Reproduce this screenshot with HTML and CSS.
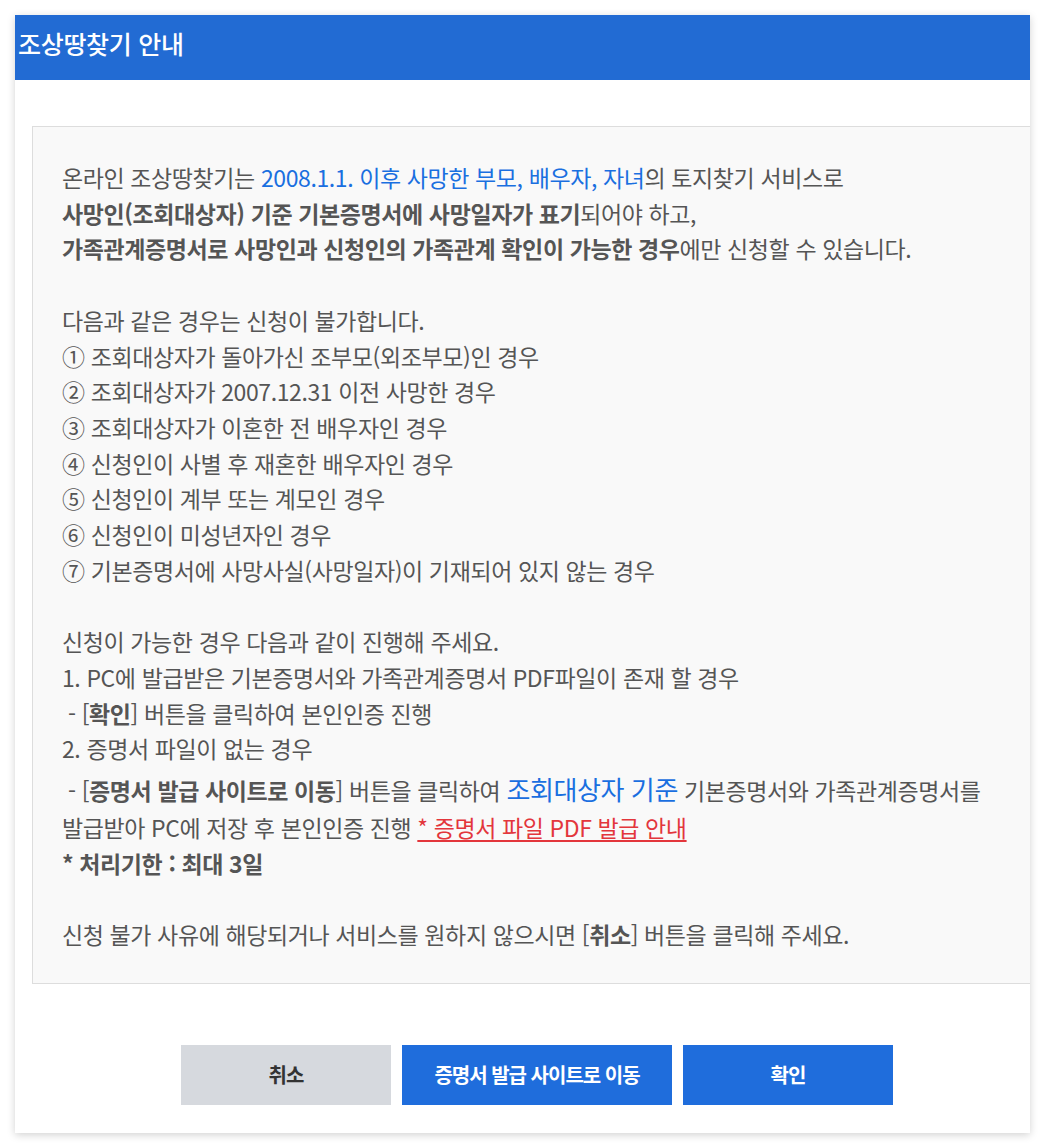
FILE: index.html
```html
<!DOCTYPE html>
<html lang="ko">
<head>
  <meta charset="UTF-8" />
  <meta name="viewport" content="width=device-width, initial-scale=1" />
  <title>조상땅찾기 안내</title>
  <link rel="stylesheet" href="styles.css">
</head>
<body>
  <div class="modal">
    <div class="modal-header">
      <h1>조상땅찾기 안내</h1>
    </div>
    <div class="modal-body">
      <div class="notice">
        <p>
          온라인 조상땅찾기는 <span class="blue">2008.1.1. 이후 사망한 부모, 배우자, 자녀</span>의 토지찾기 서비스로<br>
          <b>사망인(조회대상자) 기준 기본증명서에 사망일자가 표기</b>되어야 하고,<br>
          <b>가족관계증명서로 사망인과 신청인의 가족관계 확인이 가능한 경우</b>에만 신청할 수 있습니다.
        </p>
        <p>
          다음과 같은 경우는 신청이 불가합니다.<br>
          ① 조회대상자가 돌아가신 조부모(외조부모)인 경우<br>
          ② 조회대상자가 2007.12.31 이전 사망한 경우<br>
          ③ 조회대상자가 이혼한 전 배우자인 경우<br>
          ④ 신청인이 사별 후 재혼한 배우자인 경우<br>
          ⑤ 신청인이 계부 또는 계모인 경우<br>
          ⑥ 신청인이 미성년자인 경우<br>
          ⑦ 기본증명서에 사망사실(사망일자)이 기재되어 있지 않는 경우
        </p>
        <p>
          신청이 가능한 경우 다음과 같이 진행해 주세요.<br>
          1. PC에 발급받은 기본증명서와 가족관계증명서 PDF파일이 존재 할 경우<br>
          &nbsp;- [<b>확인</b>] 버튼을 클릭하여 본인인증 진행<br>
          2. 증명서 파일이 없는 경우<br>
          &nbsp;- [<b>증명서 발급 사이트로 이동</b>] 버튼을 클릭하여 <span class="blue big">조회대상자 기준</span> 기본증명서와 가족관계증명서를
          발급받아 PC에 저장 후 본인인증 진행 <a href="#" class="guide-link">* 증명서 파일 PDF 발급 안내</a><br>
          <b>* 처리기한 : 최대 3일</b>
        </p>
        <p>
          신청 불가 사유에 해당되거나 서비스를 원하지 않으시면 [<b>취소</b>] 버튼을 클릭해 주세요.
        </p>
      </div>
      <div class="button-row">
        <button type="button" class="btn btn-gray">취소</button>
        <button type="button" class="btn btn-blue btn-wide">증명서 발급 사이트로 이동</button>
        <button type="button" class="btn btn-blue">확인</button>
      </div>
    </div>
  </div>
</body>
</html>
```

FILE: styles.css
```css
body {
  margin: 0;
  padding: 15px;
  background: #ffffff;
  font-family: "Noto Sans CJK KR", "Noto Sans", sans-serif;
}
.modal {
  width: 1015px;
  background: #ffffff;
  box-shadow: 0 2px 8px rgba(0, 0, 0, 0.18);
  overflow: hidden;
}
.modal-header {
  background-color: #226bd3;
  height: 65px;
  box-sizing: border-box;
  padding: 9px 0 0 3px;
}
.modal-header h1 {
  margin: 0;
  font-size: 25px;
  font-weight: 500;
  line-height: 38px;
  color: #ffffff;
  letter-spacing: -0.3px;
}
.modal-body {
  padding: 46px 0 28px 17px;
}
.notice {
  background-color: #f9f9f9;
  border: 1px solid #dddddd;
  border-right: none;
  padding: 33px 36px 30px 29px;
  font-size: 23px;
  line-height: 35.7px;
  color: #555555;
  letter-spacing: -0.4px;
}
.notice p {
  margin: 0 0 35.7px 0;
}
.notice p:last-child {
  margin-bottom: 0;
}
.notice b {
  font-weight: 700;
}
.blue {
  color: #1a6fe0;
}
.big {
  font-size: 26px;
  line-height: 43px;
}
.guide-link {
  color: #e3363c;
  text-decoration: underline;
  text-underline-offset: 3px;
}
.button-row {
  display: flex;
  gap: 11px;
  margin-top: 61px;
  padding-left: 149px;
}
.btn {
  width: 210px;
  height: 60px;
  border: none;
  font-family: inherit;
  font-size: 20px;
  font-weight: 700;
  letter-spacing: -1px;
  cursor: pointer;
}
.btn-wide {
  width: 270px;
}
.btn-gray {
  background-color: #d6d9de;
  color: #333333;
}
.btn-blue {
  background-color: #1f6ddc;
  color: #ffffff;
}
```
